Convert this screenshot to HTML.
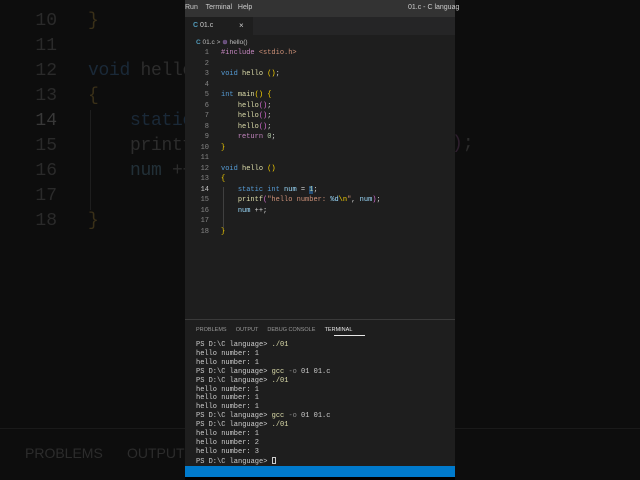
<!DOCTYPE html>
<html><head><style>
*{margin:0;padding:0;box-sizing:border-box}
body{width:640px;height:480px;background:#0d0d0d;position:relative;overflow:hidden;font-family:"Liberation Sans",sans-serif}
.a{position:absolute;white-space:pre}
.bg{font-family:"Liberation Mono",monospace;font-size:18px;color:#2a2a2a}
.m{font-family:"Liberation Mono",monospace;font-size:7px;white-space:pre;position:absolute}
.kw{color:#569cd6}.fn{color:#dcdcaa}.br{color:#ffd700}.pp{color:#c586c0}.st{color:#ce9178}.nu{color:#b5cea8}.va{color:#9cdcfe}.pu{color:#da70d6}
.ln{color:#858585;width:24px;text-align:right;display:inline-block;margin-right:12px}
</style></head><body>
<div class="a bg" style="left:35px;top:-16px;line-height:25px;text-align:right;width:22px">9
10
11
12
13
<span style="color:#383838">14</span>
15
16
17
18</div>
<div class="a bg" style="left:88px;top:-16px;line-height:25px;color:#2c2c2c;letter-spacing:-0.3px">    return
<span style="color:#3a3018">}</span>

<span style="color:#1a2938">void</span> hello
<span style="color:#3a3018">{</span>
    <span style="color:#1a2938">static</span>
    printf
    <span style="color:#223038">num</span> ++;

<span style="color:#3a3018">}</span></div>
<div class="a bg" style="left:452px;top:134px;color:#2c2c2c"><span style="color:#2e1f2e">)</span>;</div>
<div class="a" style="left:90px;top:110px;width:1px;height:100px;background:#1e1e1e"></div>
<div class="a" style="left:0;top:428px;width:640px;height:1px;background:#1a1a1a"></div>
<div class="a" style="left:25px;top:445px;font-size:14px;color:#2c2c2c">PROBLEMS</div>
<div class="a" style="left:127px;top:445px;font-size:14px;color:#2c2c2c">OUTPUT</div>

<div class="a" style="left:185px;top:0;width:270px;height:477px;background:#1e1e1e"></div>
<div class="a" style="left:185px;top:0;width:270px;height:17px;background:#333333"></div>
<div class="a" style="left:185px;top:4px;font-size:7px;color:#cccccc">Run &nbsp;&nbsp;&nbsp;Terminal &nbsp;&nbsp;Help</div>
<div class="a" style="left:408px;top:4px;font-size:7px;color:#cccccc">01.c - C languag</div>
<div class="a" style="left:185px;top:17px;width:270px;height:18px;background:#252526"></div>
<div class="a" style="left:185px;top:17px;width:68px;height:18px;background:#1e1e1e"></div>
<div class="a" style="left:193px;top:22px;font-size:7px;color:#cccccc"><b style="color:#519aba">C</b> 01.c</div>
<div class="a" style="left:239px;top:21px;font-size:8px;color:#ccc">×</div>
<div class="a" style="left:196px;top:38px;font-size:6.5px;color:#bbb"><b style="color:#519aba">C</b> 01.c &gt; <span style="color:#b180d7">⊕</span> hello()</div>

<div class="m" style="left:185px;top:48px;line-height:10.5px;color:#d4d4d4"><span class="ln">1</span><span class="pp">#include</span> <span class="st">&lt;stdio.h&gt;</span>
<span class="ln">2</span>
<span class="ln">3</span><span class="kw">void</span> <span class="fn">hello</span> <span class="br">()</span>;
<span class="ln">4</span>
<span class="ln">5</span><span class="kw">int</span> <span class="fn">main</span><span class="br">()</span> <span class="br">{</span>
<span class="ln">6</span>    <span class="fn">hello</span><span class="pu">()</span>;
<span class="ln">7</span>    <span class="fn">hello</span><span class="pu">()</span>;
<span class="ln">8</span>    <span class="fn">hello</span><span class="pu">()</span>;
<span class="ln">9</span>    <span class="pp">return</span> <span class="nu">0</span>;
<span class="ln">10</span><span class="br">}</span>
<span class="ln">11</span>
<span class="ln">12</span><span class="kw">void</span> <span class="fn">hello</span> <span class="br">()</span>
<span class="ln">13</span><span class="br">{</span>
<span class="ln" style="color:#c6c6c6">14</span>    <span class="kw">static</span> <span class="kw">int</span> <span class="va">num</span> = <span class="nu" style="background:#264f78">1</span>;
<span class="ln">15</span>    <span class="fn">printf</span><span class="pu">(</span><span class="st">"hello number: </span><span class="va">%d</span><span class="br">\n</span><span class="st">"</span>, <span class="va">num</span><span class="pu">)</span>;
<span class="ln">16</span>    <span class="va">num</span> ++;
<span class="ln">17</span>
<span class="ln">18</span><span class="br">}</span></div>
<div class="a" style="left:223px;top:187px;width:1px;height:41px;background:#404040"></div>

<div class="a" style="left:185px;top:319px;width:270px;height:1px;background:#3a3a3a"></div>
<div class="a" style="left:196px;top:327px;font-size:5.5px;color:#999">PROBLEMS &nbsp;&nbsp;&nbsp;&nbsp;&nbsp;OUTPUT &nbsp;&nbsp;&nbsp;&nbsp;&nbsp;DEBUG CONSOLE &nbsp;&nbsp;&nbsp;&nbsp;&nbsp;<span style="color:#e7e7e7">TERMINAL</span></div>
<div class="a" style="left:334px;top:335px;width:31px;height:1px;background:#e7e7e7"></div>
<div class="m" style="left:196px;top:341px;line-height:8.9px;color:#cccccc;font-size:7px">PS D:\C language&gt; <span class="fn">./01</span>
hello number: 1
hello number: 1
PS D:\C language&gt; <span class="fn">gcc</span> <span style="color:#888">-o</span> 01 01.c
PS D:\C language&gt; <span class="fn">./01</span>
hello number: 1
hello number: 1
hello number: 1
PS D:\C language&gt; <span class="fn">gcc</span> <span style="color:#888">-o</span> 01 01.c
PS D:\C language&gt; <span class="fn">./01</span>
hello number: 1
hello number: 2
hello number: 3
PS D:\C language&gt; <span style="display:inline-block;width:4px;height:7px;border:1px solid #ccc;vertical-align:-1px"></span></div>
<div class="a" style="left:185px;top:466px;width:270px;height:11px;background:#007acc"></div>
<div class="a" style="left:185px;top:477px;width:270px;height:3px;background:#000"></div>
</body></html>
